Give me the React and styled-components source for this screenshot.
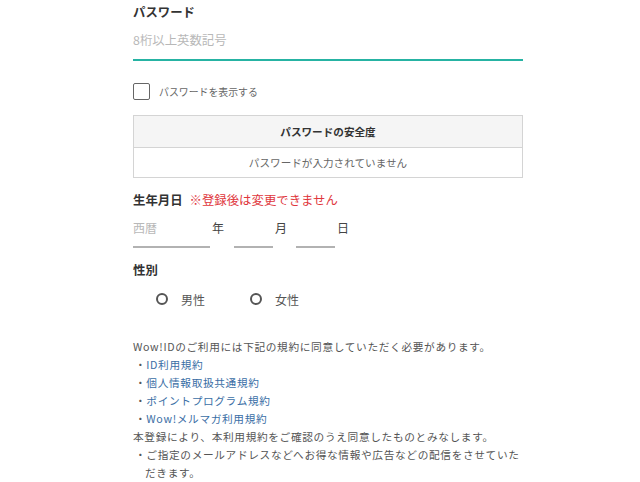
import React, { useState } from 'react';
import styled, { createGlobalStyle } from 'styled-components';

const GlobalStyle = createGlobalStyle`
  body {
    margin: 0;
    padding: 0;
    background: #ffffff;
    font-family: "Noto Sans CJK JP", "Noto Sans", sans-serif;
  }
`;

const Page = styled.div`
  padding: 3px 0 0 133px;
`;

const Form = styled.div`
  width: 390px;
  display: flex;
  flex-direction: column;
`;

const FieldLabel = styled.div`
  display: flex;
  align-items: center;
  gap: 7px;
  font-size: 12.4px;
  font-weight: 700;
  line-height: 18px;
  color: #333;
  margin-top: ${(p) => p.$mt || 0}px;
`;

const Note = styled.span`
  font-weight: 400;
  color: #e0363c;
`;

const TextInput = styled.input`
  box-sizing: border-box;
  width: 100%;
  border: none;
  border-bottom: 2px solid #26b3a3;
  padding: 10px 0 10px;
  font-family: inherit;
  font-size: 12.4px;
  line-height: 18px;
  color: #333;
  outline: none;
  background: transparent;

  &::placeholder {
    color: #b8b8b8;
  }
`;

const CheckRow = styled.label`
  display: flex;
  align-items: center;
  gap: 9px;
  margin-top: 22px;
  font-size: 9.9px;
  color: #666;
  cursor: pointer;
`;

const Box = styled.span`
  box-sizing: border-box;
  width: 17px;
  height: 17px;
  border: 1px solid #666;
  border-radius: 2px;
  background: ${(p) => (p.$on ? '#26b3a3' : '#fff')};
`;

const Strength = styled.div`
  margin-top: 15px;
  border: 1px solid #d4d4d4;
  text-align: center;
`;

const StrengthHead = styled.div`
  height: 31px;
  line-height: 31px;
  background: #f5f5f5;
  border-bottom: 1px solid #d4d4d4;
  font-size: 10.6px;
  font-weight: 700;
  color: #333;
`;

const StrengthBody = styled.div`
  height: 29px;
  line-height: 29px;
  font-size: 10.6px;
  color: #666;
`;

const DateRow = styled.div`
  display: flex;
  align-items: flex-start;
`;

const DateInput = styled.input`
  box-sizing: border-box;
  width: ${(p) => p.$w}px;
  margin-left: ${(p) => p.$ml || 0}px;
  border: none;
  border-bottom: 2px solid #b2b2b2;
  padding: 10px 0 9px;
  font-family: inherit;
  font-size: 12px;
  line-height: 18px;
  color: #333;
  outline: none;
  background: transparent;

  &::placeholder {
    color: #b8b8b8;
  }
`;

const Unit = styled.span`
  padding: 10px 0 0 2px;
  font-size: 12px;
  line-height: 18px;
  color: #444;
`;

const RadioRow = styled.div`
  display: flex;
  align-items: center;
  margin-top: 11px;
  padding-left: 23px;
  height: 18px;
`;

const RadioOption = styled.label`
  display: flex;
  align-items: center;
  gap: 13px;
  width: 94px;
  font-size: 12px;
  color: #555;
  cursor: pointer;
`;

const Circle = styled.span`
  box-sizing: border-box;
  width: 12px;
  height: 12px;
  border: 2px solid #555;
  border-radius: 50%;
`;

const Terms = styled.div`
  margin-top: 30px;
  font-size: 10.7px;
  line-height: 18px;
  letter-spacing: 0.64px;
  color: #555;
`;

const TermList = styled.ul`
  list-style: none;
  margin: 0;
  padding: 0;
`;

const TermItem = styled.li`
  padding-left: 12px;
  text-indent: -10px;
`;

const TermLink = styled.a`
  color: #3a6ea5;
  text-decoration: none;
`;

export default function App() {
  const [show, setShow] = useState(false);
  const terms = ['ID利用規約', '個人情報取扱共通規約', 'ポイントプログラム規約', 'Wow!メルマガ利用規約'];

  return (
    <Page>
      <GlobalStyle />
      <Form>
        <FieldLabel>パスワード</FieldLabel>
        <TextInput type={show ? 'text' : 'password'} placeholder="8桁以上英数記号" />

        <CheckRow onClick={() => setShow(!show)}>
          <Box $on={show} />
          パスワードを表示する
        </CheckRow>

        <Strength>
          <StrengthHead>パスワードの安全度</StrengthHead>
          <StrengthBody>パスワードが入力されていません</StrengthBody>
        </Strength>

        <FieldLabel $mt={13}>
          生年月日<Note>※登録後は変更できません</Note>
        </FieldLabel>
        <DateRow>
          <DateInput $w={77} placeholder="西暦" />
          <Unit>年</Unit>
          <DateInput $w={39} $ml={10} />
          <Unit>月</Unit>
          <DateInput $w={39} $ml={9} />
          <Unit>日</Unit>
        </DateRow>

        <FieldLabel $mt={13}>性別</FieldLabel>
        <RadioRow>
          <RadioOption>
            <Circle />
            男性
          </RadioOption>
          <RadioOption>
            <Circle />
            女性
          </RadioOption>
        </RadioRow>

        <Terms>
          Wow!IDのご利用には下記の規約に同意していただく必要があります。
          <TermList>
            {terms.map((t) => (
              <TermItem key={t}>
                ・<TermLink href="#">{t}</TermLink>
              </TermItem>
            ))}
          </TermList>
          本登録により、本利用規約をご確認のうえ同意したものとみなします。
          <TermList>
            <TermItem>・ご指定のメールアドレスなどへお得な情報や広告などの配信をさせていただきます。</TermItem>
          </TermList>
        </Terms>
      </Form>
    </Page>
  );
}
